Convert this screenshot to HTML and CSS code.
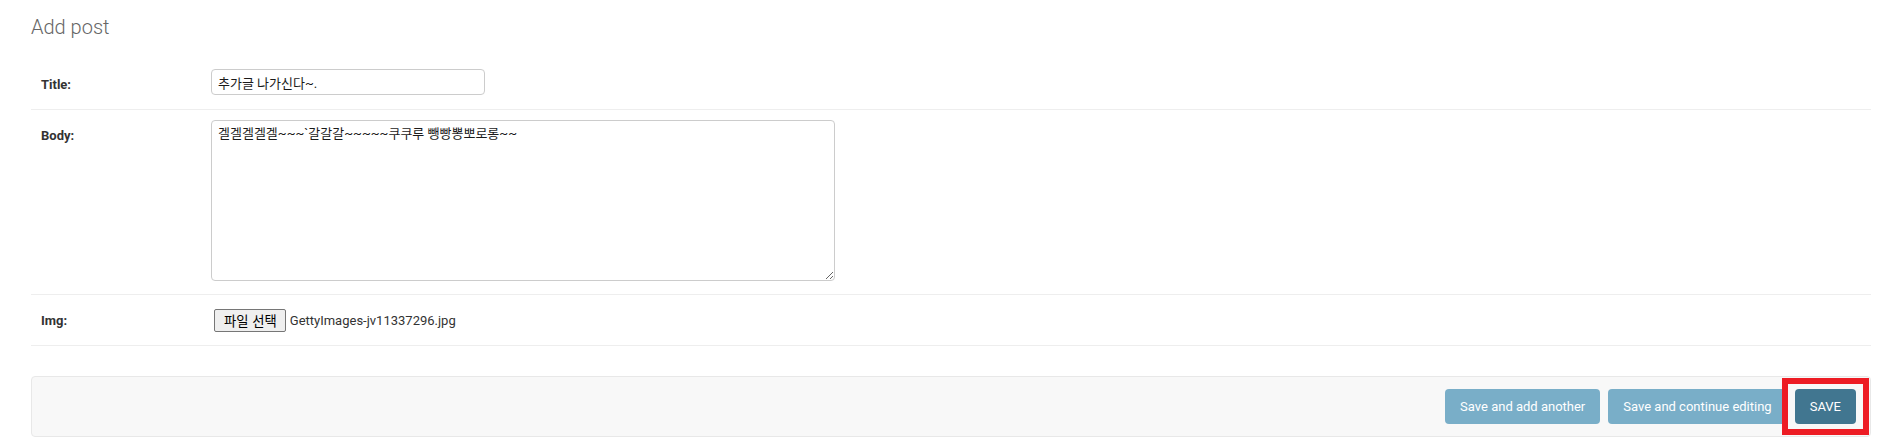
FILE: index.html
```html
<!DOCTYPE html>
<html lang="ko">
<head>
<meta charset="utf-8">
<title>Add post</title>
<link rel="stylesheet" href="styles.css">
</head>
<body>
<div class="page">
  <h1 class="page-title">Add post</h1>
  <form class="change-form">
    <fieldset class="module">
      <div class="form-row">
        <label class="field-label" for="id_title">Title:</label>
        <div class="field">
          <input class="text-input" id="id_title" type="text" value="추가글 나가신다~.">
        </div>
      </div>
      <div class="form-row">
        <label class="field-label" for="id_body">Body:</label>
        <div class="field">
          <textarea class="text-area" id="id_body">겔겔겔겔겔~~~`갈갈갈~~~~~쿠쿠루 뺑빵뽕뽀로롱~~</textarea>
        </div>
      </div>
      <div class="form-row">
        <label class="field-label" for="id_img">Img:</label>
        <div class="field file-widget">
          <button type="button" class="file-button" id="id_img">파일 선택</button>
          <span class="file-name">GettyImages-jv11337296.jpg</span>
        </div>
      </div>
    </fieldset>
    <div class="submit-row">
      <button type="button" class="btn">Save and add another</button>
      <button type="button" class="btn">Save and continue editing</button>
      <span class="highlight"><button type="button" class="btn btn-default">SAVE</button></span>
    </div>
  </form>
</div>
</body>
</html>
```

FILE: styles.css
```css
html, body {
  margin: 0;
  padding: 0;
  background: #ffffff;
}

body {
  font-family: Roboto, "Noto Sans CJK KR", sans-serif;
  font-size: 13px;
  color: #333333;
}

.page {
  padding: 15px 13px 0 31px;
}

.page-title {
  margin: 0 0 20px;
  font-size: 20px;
  line-height: 24px;
  font-weight: 300;
  color: #666666;
}

.change-form {
  margin: 0;
}

.module {
  margin: 0;
  padding: 0;
  border: 0;
  min-width: 0;
}

.form-row {
  display: flex;
  align-items: flex-start;
  padding: 10px;
  border-bottom: 1px solid #eeeeee;
}

.field-label {
  flex: 0 0 160px;
  padding: 6px 10px 0 0;
  font-size: 13px;
  line-height: 20px;
  font-weight: 700;
  color: #333333;
}

.field {
  display: flex;
  flex-direction: column;
  align-items: flex-start;
}

.text-input {
  box-sizing: border-box;
  width: 274px;
  height: 26px;
  margin: 0 0 4px;
  padding: 0 6px;
  border: 1px solid #cccccc;
  border-radius: 4px;
  font-family: Roboto, "Noto Sans CJK KR", sans-serif;
  font-size: 13px;
  color: #1a1a1a;
  background: #ffffff;
  outline: none;
}

.text-area {
  box-sizing: border-box;
  width: 624px;
  height: 161px;
  margin: 0 0 3px;
  padding: 4px 6px;
  border: 1px solid #cccccc;
  border-radius: 4px;
  font-family: Roboto, "Noto Sans CJK KR", sans-serif;
  font-size: 13px;
  line-height: 18px;
  color: #1a1a1a;
  background: #ffffff;
  resize: both;
  outline: none;
}

.file-widget {
  flex-direction: row;
  align-items: center;
  padding: 4px 0 3px 3px;
}

.file-button {
  box-sizing: border-box;
  height: 23px;
  margin: 0 4px 0 0;
  padding: 0 8px 0 9px;
  border: 1px solid #767676;
  border-radius: 2px;
  background: #efefef;
  font-family: "Noto Sans CJK KR", Roboto, sans-serif;
  font-size: 13.333px;
  line-height: 19px;
  color: #000000;
}

.file-name {
  font-family: Roboto, sans-serif;
  font-size: 13px;
  color: #333333;
}

.submit-row {
  display: flex;
  justify-content: flex-end;
  align-items: center;
  gap: 8px;
  margin: 30px 0 0;
  padding: 12px 14px;
  background: #f8f8f8;
  border: 1px solid #e8e8e8;
  border-radius: 4px;
}

.btn {
  padding: 10px 15px;
  border: 0;
  border-radius: 4px;
  background: #79aec8;
  color: #ffffff;
  font-family: Roboto, sans-serif;
  font-size: 13px;
  line-height: 15px;
  font-weight: 400;
}

.btn-default {
  background: #417690;
}

.highlight {
  position: relative;
  display: flex;
}

.highlight::after {
  content: "";
  position: absolute;
  top: -11px;
  bottom: -11px;
  left: -13px;
  right: -13px;
  border: 6px solid #ed1c24;
  pointer-events: none;
}
```
